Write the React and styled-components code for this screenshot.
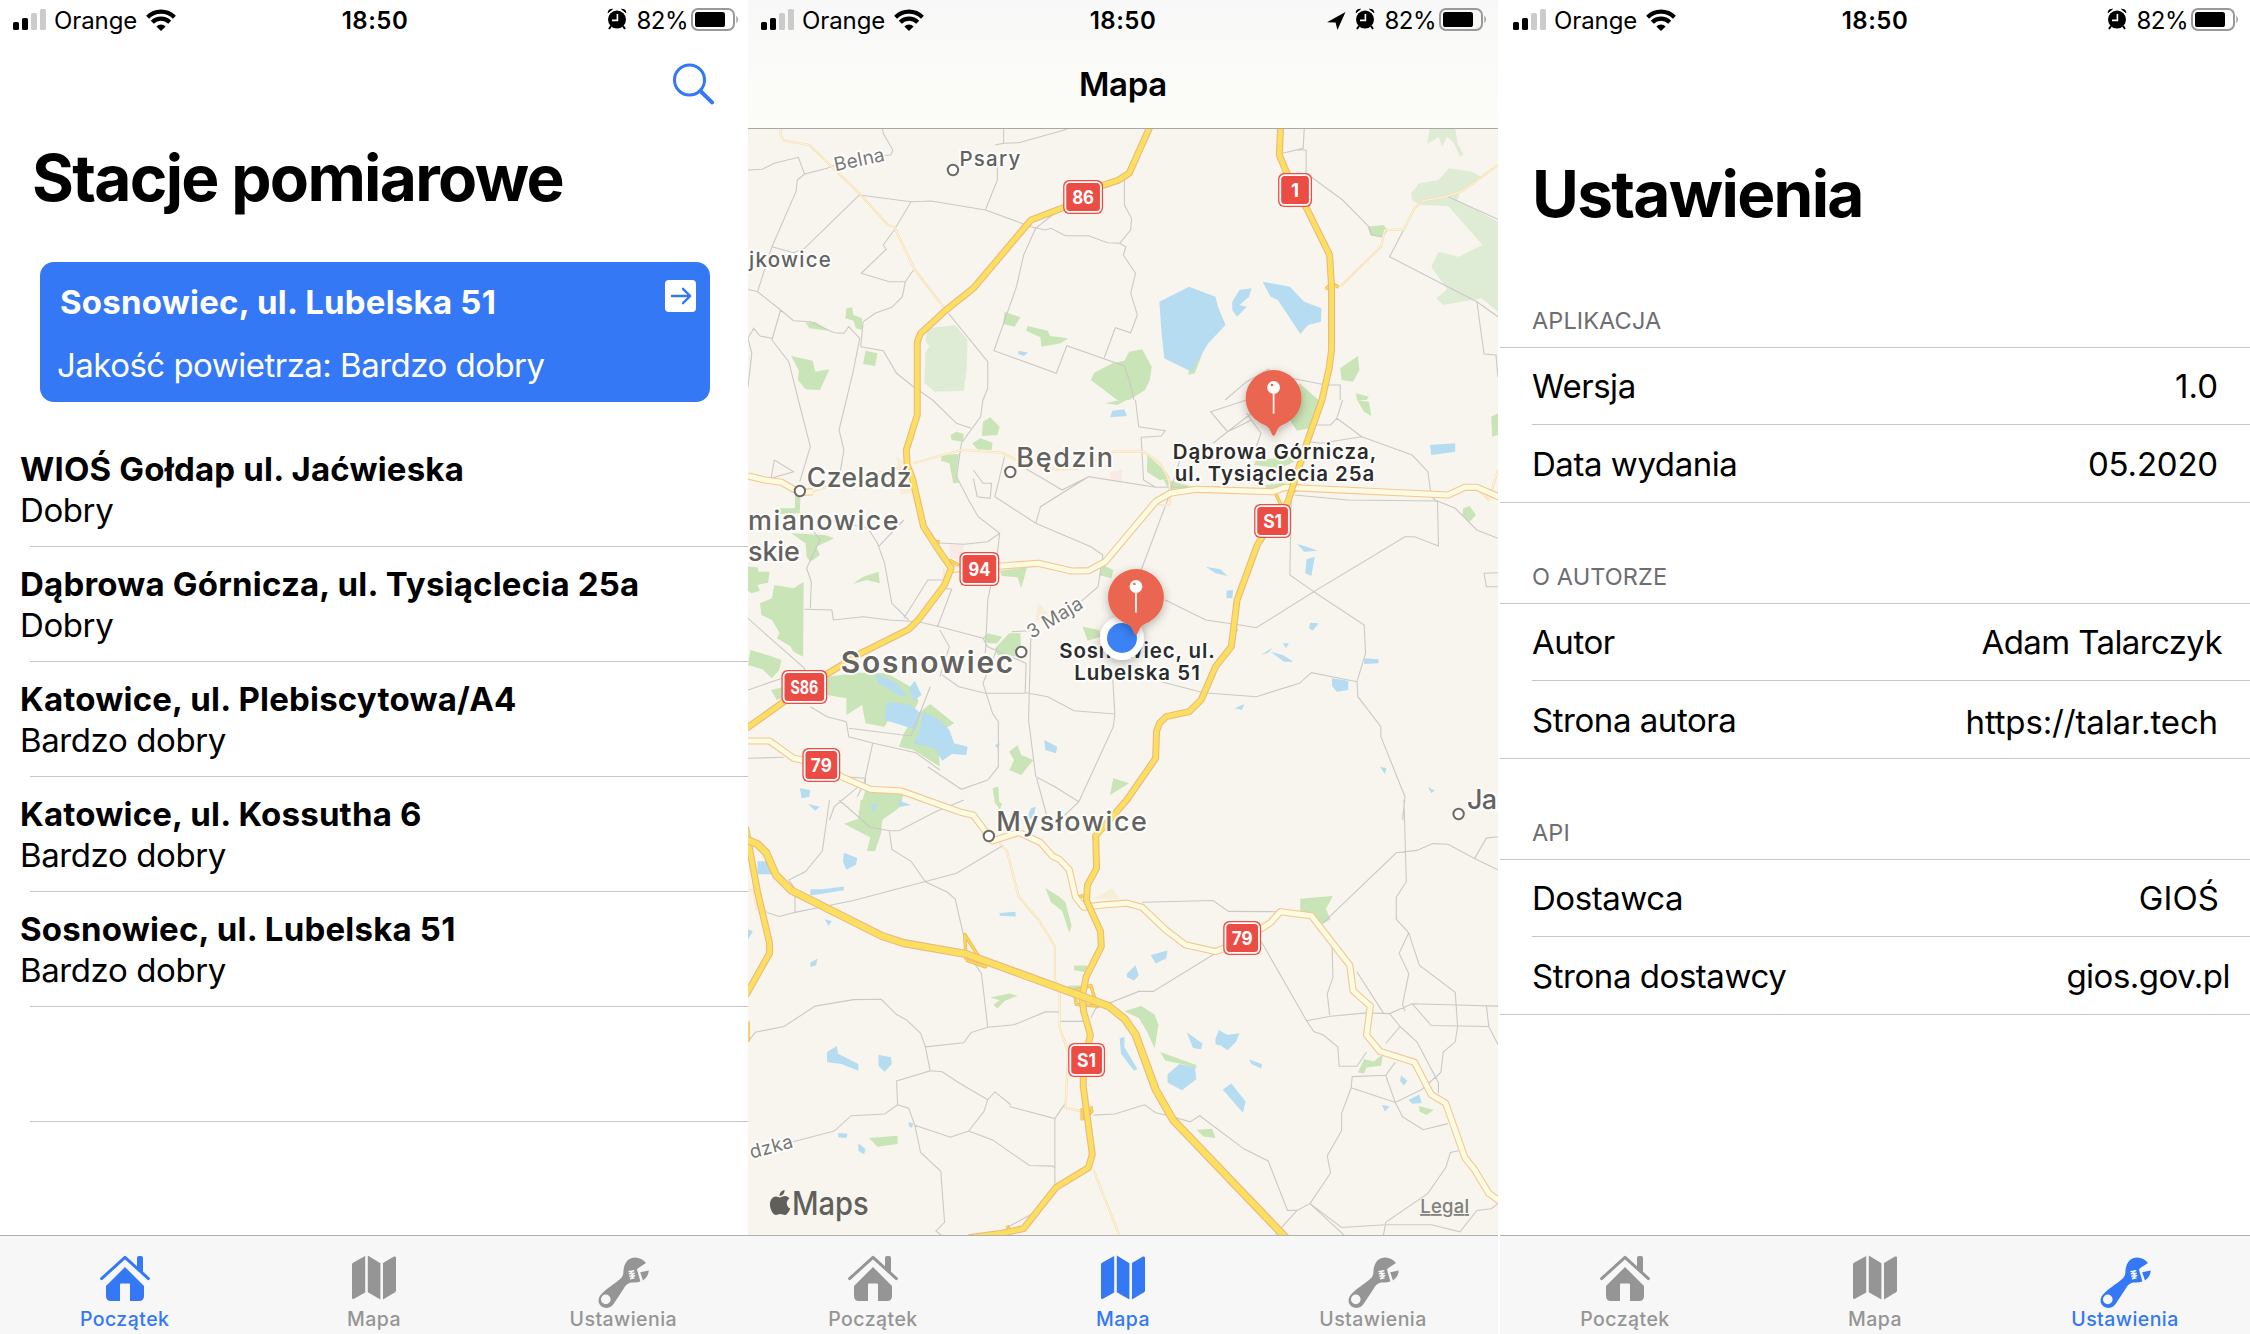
import React from "react";
import styled, { createGlobalStyle } from "styled-components";

const GlobalStyle = createGlobalStyle`
  * { box-sizing: border-box; }
  body {
    margin: 0;
    background: #fff;
    color: #000;
    font-family: Inter, "Liberation Sans", sans-serif;
  }
  svg { display: block; flex: none; }
`;

const BLUE = "#3478f6";
const GREY = "#959595";
const LINE = "#c6c6c8";

/* ---------- shell ---------- */

const Board = styled.div`
  display: flex;
  width: 2250px;
  height: 1334px;
  overflow: hidden;
  background: #fff;
`;

const Phone = styled.section`
  display: flex;
  flex-direction: column;
  width: ${(p) => p.$width}px;
  margin-left: ${(p) => p.$gap || 0}px;
  height: 1334px;
  overflow: hidden;
  background: #fff;
`;

const Body = styled.main`
  flex: 1;
  min-height: 0;
  display: flex;
  flex-direction: column;
`;

/* ---------- status bar ---------- */

const StatusRow = styled.header`
  flex: none;
  display: grid;
  grid-template-columns: 1fr auto 1fr;
  align-items: center;
  height: 40px;
  padding: 0 ${(p) => p.$inset}px 0 13px;
  font-size: 24px;
  line-height: 38px;
`;

const StatusSide = styled.div`
  display: flex;
  align-items: center;
  justify-content: ${(p) => (p.$end ? "flex-end" : "flex-start")};
`;

const Carrier = styled.span`
  margin: 0 9px 0 7px;
  padding-top: 2px;
  letter-spacing: -0.1px;
`;

const Clock = styled.time`
  margin-right: 3px;
  padding-top: 2px;
  font-weight: 600;
  letter-spacing: 0.5px;
`;

const Percent = styled.span`
  margin: 0 3px 0 9px;
  padding-top: 2px;
  letter-spacing: -0.5px;
`;

function StatusBar({ location, inset = 10 }) {
  return (
    <StatusRow $inset={inset}>
      <StatusSide>
        <svg width="34" height="40" viewBox="0 0 34 40">
          <rect x="0" y="22" width="6" height="8" rx="1.6" />
          <rect x="9" y="18" width="6" height="12" rx="1.6" />
          <rect x="18" y="13" width="6" height="17" rx="1.6" fill="#cbcbcb" />
          <rect x="27" y="9" width="6" height="21" rx="1.6" fill="#cbcbcb" />
        </svg>
        <Carrier>Orange</Carrier>
        <svg width="30" height="40" viewBox="0 0 30 40" fill="none" stroke="#000" strokeWidth="4.2">
          <path d="M1.6 17.2A19 19 0 0 1 28.4 17.2" />
          <path d="M6.3 22.2A12.4 12.4 0 0 1 23.7 22.2" />
          <path d="M10.4 26.4A6.6 6.6 0 0 1 19.6 26.4L15 31Z" fill="#000" stroke="none" />
        </svg>
      </StatusSide>
      <Clock>18:50</Clock>
      <StatusSide $end>
        {location && (
          <svg width="29" height="40" viewBox="0 0 29 40">
            <path d="M19.5 12L1 22.2L9.6 22.6L11.4 30Z" />
          </svg>
        )}
        <svg width="20" height="40" viewBox="0 0 20 40">
          <circle cx="10" cy="19.6" r="9" />
          <path d="M1 12.6Q1.4 9 5.4 9.2Z M19 12.6Q18.6 9 14.6 9.2Z" stroke="#000" strokeWidth="1" />
          <path d="M4 26L2 29M16 26L18 29" stroke="#000" strokeWidth="2" />
          <path d="M10.4 14V20.4H5" fill="none" stroke="#fff" strokeWidth="1.6" />
        </svg>
        <Percent>82%</Percent>
        <svg width="49" height="40" viewBox="0 0 49 40">
          <rect x="1" y="9" width="42" height="21" rx="6" fill="none" stroke="#999" strokeWidth="2" />
          <rect x="4" y="12" width="30" height="15" rx="2.6" />
          <path d="M45.4 15.6Q48.6 19.5 45.4 23.4Z" fill="#999" />
        </svg>
      </StatusSide>
    </StatusRow>
  );
}

/* ---------- tab bar ---------- */

const Tabs = styled.nav`
  flex: none;
  display: flex;
  height: 99px;
  border-top: 1px solid #b0b0b0;
  background: #f7f7f7;
`;

const Tab = styled.div`
  flex: 1;
  display: flex;
  flex-direction: column;
  align-items: center;
  padding-top: 18px;
  color: ${(p) => (p.$active ? BLUE : GREY)};
`;

const TabLabel = styled.span`
  margin-top: -2px;
  font-size: 19.5px;
  font-weight: 500;
  line-height: 24px;
  letter-spacing: 0.45px;
`;

const HomeIcon = () => (
  <svg width="52" height="55" viewBox="0 0 52 55" fill="currentColor">
    <path d="M26 13L45 32V42Q45 47 40 47H31V30.5Q31 29.5 30 29.5H22Q21 29.5 21 30.5V47H12Q7 47 7 42V32Z" />
    <path d="M2.6 24.6L26 3.4L49.4 24.6" fill="none" stroke="currentColor" strokeWidth="3" strokeLinecap="round" strokeLinejoin="round" />
    <path d="M38 4Q38 2 40 2H42Q44 2 44 4V19L38 13.6Z" />
  </svg>
);

const MapIcon = () => (
  <svg width="46" height="55" viewBox="0 0 46 55" fill="currentColor">
    <path d="M14.2 2V38.4L3 44.8Q1 45.6 1 43.4V10.6Q1 9.4 2 8.8Z" />
    <path d="M16.8 1.4L29.4 9.2V45.6L16.8 38.2Z" />
    <path d="M32 9L43 2.6Q45 1.8 45 4V36.4Q45 37.4 44 38.2L32 45.4Z" />
  </svg>
);

const WrenchIcon = () => (
  <svg width="54" height="55" viewBox="0 0 54 55">
    <path
      fill="currentColor"
      fillRule="evenodd"
      d="M50 9C44.6 1.6 31.6 .6 28.2 12.4C26.8 17.2 28.2 20.6 25.6 23.4C19 30 9.4 34.6 4.4 41.2C.6 46.6 3 52.6 8.6 53.8C13.4 54.6 16.2 52.4 18.6 48.6L27.8 34.4C30.8 29.4 33.6 28.4 37.6 28.6Q41.6 28.4 44.4 27.4L41.4 17Q40.4 15.6 42 14.2L50 9ZM9.8 40.6A4.8 4.8 0 1 1 9.8 50.2A4.8 4.8 0 1 1 9.8 40.6Z"
    />
    <path fill="currentColor" d="M44.2 18.2L52.8 16.6Q52.6 22.4 47 26.6Z" />
    <path d="M32.4 17.6L38.2 16.6L32.8 20L38.6 19.2L33.4 22.4L39.2 21.6L34 24.8L38.6 24" fill="none" stroke="#f7f7f7" strokeWidth="1.2" />
  </svg>
);

const TABS = [
  { name: "Początek", Icon: HomeIcon },
  { name: "Mapa", Icon: MapIcon },
  { name: "Ustawienia", Icon: WrenchIcon },
];

function TabBar({ active }) {
  return (
    <Tabs>
      {TABS.map(({ name, Icon }) => (
        <Tab key={name} $active={name === active}>
          <Icon />
          <TabLabel>{name}</TabLabel>
        </Tab>
      ))}
    </Tabs>
  );
}

/* ---------- stations ---------- */

const Toolbar = styled.div`
  flex: none;
  display: flex;
  justify-content: flex-end;
  align-items: center;
  height: 87px;
  margin-bottom: 11px;
  padding-right: 33px;
`;

const LargeTitle = styled.h1`
  margin: 0;
  padding-left: 32px;
  font-size: 64px;
  font-weight: 700;
  line-height: 80px;
  letter-spacing: -1.7px;
  white-space: nowrap;
`;

const NearestCard = styled.article`
  flex: none;
  display: flex;
  justify-content: space-between;
  width: 670px;
  height: 140px;
  margin: 44px 0 0 40px;
  padding: 18px 14px 0 17px;
  border-radius: 14px;
  background: ${BLUE};
  color: #fff;
`;

const CardTitle = styled.h2`
  margin: 0 0 0 3px;
  font-size: 33px;
  font-weight: 700;
  line-height: 44px;
  letter-spacing: 0.22px;
`;

const CardText = styled.p`
  margin: 19px 0 0;
  font-size: 33px;
  line-height: 44px;
  letter-spacing: -0.52px;
`;

const Stations = styled.ul`
  list-style: none;
  margin: 30px 0 0;
  padding: 0;
`;

const Station = styled.li`
  display: flex;
  flex-direction: column;
  height: 115px;
  padding: 17px 0 0 20px;
  background: linear-gradient(${LINE}, ${LINE}) 30px 100% / 100% 1px no-repeat;
`;

const StationName = styled.strong`
  font-size: 33px;
  font-weight: 700;
  line-height: 41px;
  letter-spacing: 0.2px;
  white-space: nowrap;
`;

const StationState = styled.span`
  font-size: 33px;
  line-height: 41px;
  letter-spacing: -0.4px;
`;

const STATIONS = [
  ["WIOŚ Gołdap ul. Jaćwieska", "Dobry"],
  ["Dąbrowa Górnicza, ul. Tysiąclecia 25a", "Dobry"],
  ["Katowice, ul. Plebiscytowa/A4", "Bardzo dobry"],
  ["Katowice, ul. Kossutha 6", "Bardzo dobry"],
  ["Sosnowiec, ul. Lubelska 51", "Bardzo dobry"],
  ["", ""],
];

function StationsScreen() {
  return (
    <Phone $width={748}>
      <StatusBar inset={8} />
      <Body>
        <Toolbar>
          <svg width="42" height="42" viewBox="0 0 42 42" fill="none" stroke={BLUE}>
            <circle cx="16.5" cy="17" r="15" strokeWidth="3" />
            <path d="M27.4 28L39 39.4" strokeWidth="4" strokeLinecap="round" />
          </svg>
        </Toolbar>
        <LargeTitle>Stacje pomiarowe</LargeTitle>
        <NearestCard>
          <div>
            <CardTitle>Sosnowiec, ul. Lubelska 51</CardTitle>
            <CardText>Jakość powietrza: Bardzo dobry</CardText>
          </div>
          <svg width="31" height="32" viewBox="0 0 31 32">
            <rect width="31" height="32" rx="4" fill="#fff" />
            <path d="M7 16H25M18 8.8L25.2 16L18 23.2" fill="none" stroke={BLUE} strokeWidth="2.4" strokeLinecap="round" strokeLinejoin="round" />
          </svg>
        </NearestCard>
        <Stations>
          {STATIONS.map(([name, state], i) => (
            <Station key={i}>
              <StationName>{name}</StationName>
              <StationState>{state}</StationState>
            </Station>
          ))}
        </Stations>
      </Body>
      <TabBar active="Początek" />
    </Phone>
  );
}

/* ---------- map ---------- */

/* Geometry is stored per tile (n, m, s); each tile has its own grid. */
const TILES = { n: [0, 3], m: [400, 3], s: [800, 2.936] };
const GRID_X = 2.08;

function toPoint(tile, x, y) {
  const [top, scale] = TILES[tile];
  return [+(x / GRID_X).toFixed(1), +(top + y / scale).toFixed(1)];
}

function trace(source, close) {
  let tile = "n";
  const out = [];
  const tokens = source.trim().split(/\s+/);
  for (let i = 0; i < tokens.length; ) {
    if (TILES[tokens[i]]) {
      tile = tokens[i];
      i += 1;
    } else {
      out.push(toPoint(tile, +tokens[i], +tokens[i + 1]).join(" "));
      i += 2;
    }
  }
  return "M" + out.join("L") + (close ? "Z" : "");
}

const join = (list, close) => list.map((s) => trace(s, close)).join("");

const FOREST = [
  "n 1422 385 1475 385 1480 430 1492 462 1485 470 1472 428 1458 410 1448 438 1440 412 1416 432",
  "n 1383 580 1400 550 1440 540 1462 505 1510 515 1528 530 1500 560 1485 575 1480 600 1564 665 1564 935 1530 895 1450 915 1435 895 1458 868 1425 800 1440 755 1482 770 1532 735 1460 618 1400 615 1385 600",
  "n 375 985 432 975 458 1020 456 1110 450 1172 390 1175 368 1150 370 1055 378 1040 370 1020",
];

const PARK = [
  "n 120 968 140 965 168 992 128 985",
  "n 205 925 217 922 220 945 238 955 238 990 225 985 220 962 203 955",
  "n 245 1052 270 1060 265 1098 240 1092",
  "n 90 1068 135 1082 140 1115 170 1108 150 1170 120 1168 104 1140 106 1112",
  "n 535 935 568 952 556 980 532 972",
  "n 583 978 625 992 630 1008 668 1015 652 1030 612 1040 610 1012 580 992",
  "n 795 1055 822 1048 842 1100 838 1140 828 1170 795 1200 770 1200 715 1140 722 1118 760 1090 785 1082",
  "n 955 1015 958 1020 932 1120 918 1125 925 1080",
  "n 1292 680 1325 675 1335 690 1325 710 1298 705",
  "n 1235 1105 1272 1068 1275 1110 1262 1145 1238 1140",
  "n 1268 1180 1295 1190 1290 1200 1270 1200",
  "n 1150 1150 1190 1200 1120 1200",
  "m 1120 40 1150 0 1192 0 1172 85 1145 92",
  "m 1270 0 1295 5 1300 48 1285 35",
  "m 1550 50 1564 40 1564 105 1552 110",
  "m 745 10 775 0 790 0 770 15",
  "m 490 65 505 52 525 80 520 105 488 108",
  "m 422 105 435 95 450 102 448 125 425 120",
  "m 468 130 485 115 510 128 508 150 478 148",
  "m 405 165 440 162 435 215 440 248 428 250 420 190 402 182",
  "m 833 165 872 215 880 235 858 240 832 215",
  "m 1060 180 1130 170 1140 185 1110 205 1055 195",
  "m 865 235 920 258 905 275 880 275",
  "m 1080 255 1120 248 1125 265 1080 270",
  "m 62 325 98 325 98 270 110 270 108 340 65 342",
  "m 90 400 160 405 180 415 142 440 150 465 130 485 122 470 120 430",
  "m 0 500 20 502 22 515 45 515 42 548 20 555 25 572 8 580 0 572",
  "m 25 610 50 595 55 555 95 565 116 545 115 770 95 755 88 738 60 715 66 700 50 660 28 645",
  "m 218 552 240 530 272 515 275 550 248 540",
  "m 525 512 582 502 570 565 562 532 530 528",
  "m 740 495 762 510 758 535 732 525",
  "m 1492 325 1505 318 1518 345 1505 365 1490 345",
  "m 500 700 530 710 520 730 500 730 490 712",
  "m 545 700 568 700 570 770 520 765 515 745",
  "m 698 680 732 690 735 710 708 722",
  "m 5 750 40 765 70 780 65 810 50 835 30 808 0 795",
  "m 48 870 72 862 80 890 60 900",
  "m 165 830 230 818 290 820 350 870 355 905 340 950 300 940 285 980 245 970 238 915 205 945 205 895 165 885",
  "m 345 950 380 912 430 970 395 1000 400 1100 345 1050 315 1040 325 1000",
  "m 545 1055 562 1035 570 1065 595 1080 570 1125 545 1110 555 1080",
  "m 510 1165 522 1160 525 1225 515 1210",
  "m 762 1135 795 1150 755 1185",
  "m 245 1170 325 1178 318 1220 280 1260 230 1240",
  "s 235 0 320 0 280 60 278 95 265 150 248 150 255 110 200 70 230 55",
  "s 515 0 530 10 525 30",
  "s 620 258 650 285 662 300 675 370 670 390 655 325 632 300",
  "s 1152 290 1220 282 1205 320 1215 350 1198 365 1175 330 1152 328",
  "s 680 486 708 486 702 505 680 500",
  "s 668 545 695 545 690 560 665 552",
  "s 505 580 545 568 562 575 535 590 520 612 512 600 525 588",
  "s 785 620 820 605 848 630 856 660 848 730 832 680 815 640",
  "s 860 740 900 760 935 778 935 788 905 775 870 765",
  "s 1285 760 1305 768 1325 745 1320 780 1290 785 1285 803 1272 800",
  "s 1400 898 1430 910 1415 925 1400 915",
  "s 935 968 968 965 975 992 950 988",
  "s 252 992 312 986 312 1010 270 1018",
];

const WATER = [
  "n 858 905 920 860 975 890 980 920 996 975 960 1030 925 1115 868 1075 862 990",
  "n 1073 845 1130 860 1160 905 1196 925 1195 965 1168 975 1152 1002 1105 900 1090 890",
  "n 1010 905 1025 870 1050 865 1045 890 1025 915 1040 920 1020 950 1010 930",
  "n 565 1052 584 1058 575 1068 563 1062",
  "m 760 32 785 28 790 48 755 52",
  "m 1422 135 1475 130 1475 155 1425 165",
  "m 1145 432 1165 440 1188 452 1160 455",
  "m 1165 478 1182 470 1175 528 1162 520",
  "m 955 500 985 508 1000 528 975 520",
  "m 998 572 1012 570 1010 595 998 595",
  "m 1172 668 1190 670 1178 692 1170 685",
  "m 1070 765 1095 742 1085 758",
  "m 1090 755 1115 765 1138 785 1118 785",
  "m 1115 730 1128 730 1122 745",
  "m 1285 775 1315 778 1315 790 1285 792",
  "m 1218 835 1252 842 1252 870 1228 875 1218 858",
  "m 1015 925 1035 912 1030 930",
  "m 265 820 310 850 332 888 318 888 272 850",
  "m 335 865 348 842 362 885 345 902",
  "m 290 905 340 915 360 940 350 990 320 975 285 960",
  "m 365 935 400 960 420 990 430 1030 458 1040 455 1065 425 1062 405 1082 390 1045 345 1030 358 990",
  "m 515 1035 525 1030 522 1048",
  "m 618 1020 645 1040 642 1060 620 1050",
  "m 108 1165 130 1170 128 1190 112 1195",
  "m 125 1212 150 1220 140 1232",
  "m 1318 1100 1332 1105 1328 1122",
  "m 1418 1160 1432 1172 1425 1180",
  "m 580 1260 590 1225 600 1220 595 1255",
  "s 255 15 272 12 262 35",
  "s 312 0 340 15 318 20",
  "s 200 155 228 170 225 190 205 205 198 180",
  "s 20 180 48 180 48 218 20 218",
  "s 130 262 155 262 200 254 200 265 155 275 130 280",
  "s 525 332 558 328 558 342 525 340",
  "s 160 350 175 355 168 370",
  "s 130 478 145 465 142 485 130 490",
  "s 0 380 10 385 0 410",
  "s 840 455 875 442 872 465 850 480",
  "s 790 510 808 485 815 515 805 530 790 520",
  "s 775 700 785 695 785 725 812 790 805 795 778 745",
  "s 165 740 185 722 188 745 230 775 230 795 195 775 165 770",
  "s 272 748 298 755 300 775 285 798 272 780",
  "s 915 682 948 715 945 732 928 728",
  "s 975 700 982 675 1000 690 1025 685 1018 710 1000 735 985 720 975 718",
  "s 875 805 900 775 932 785 935 820 905 852 875 830",
  "s 990 850 1008 832 1038 885 1032 918",
  "s 1045 762 1072 775 1070 788 1050 775",
  "s 1362 808 1375 825 1368 838 1360 825",
  "s 1378 880 1400 865 1405 890 1385 892",
  "s 1322 895 1338 900 1328 915",
  "s 188 978 208 980 205 992 188 990",
  "s 230 1008 245 1025 242 1040 230 1030",
  "s 335 945 345 950 342 962 335 958",
];

const BUILT = [
  "m 420 435 450 430 450 475 422 475",
  "m 755 215 780 210 780 250 758 242",
];

const SAND = [
  "m 605 608 625 640 598 670",
  "s 720 290 760 258 775 290",
  "m 310 170 345 200 345 275 318 285",
];

const LANES = [
  "n 0 510 30 508 55 490 105 472 118 522 165 505 190 490",
  "n 280 385 282 400 302 450 298 465 270 468",
  "n 118 522 103 540 100 575 50 740 20 875 0 868",
  "n 50 740 95 758 118 745 232 585 340 605 382 603 495 630 590 680",
  "n 495 630 520 540 520 490",
  "n 533 385 533 430 515 435",
  "n 533 430 565 428 665 388",
  "n 340 605 305 690 282 735 288 748 236 820 295 845 328 845 322 890 300 922 265 940 240 965 235 1040",
  "n 345 810 328 845",
  "n 590 680 620 690 632 685 662 707 710 707 750 728 775 730 788 740 783 765 808 820 798 880 812 945 798 998 766 983 743 1073",
  "n 785 540 785 615 800 655 798 690 775 730",
  "n 655 622 600 685 575 765 560 860 513 1052 643 1120 665 1037 785 1098 795 1140 805 1200",
  "n 418 940 500 1085 500 1165 490 1200",
  "n 20 875 68 930 95 962 130 965 180 998 200 1000 210 980 233 1015 220 1110 205 1200",
  "n 68 930 50 1020 85 1085 105 1200",
  "n 50 1015 25 1008 12 985 0 1015 8 1060 0 1160",
  "n 235 1040 282 1052 310 1120 345 1160 385 1200",
  "n 1160 385 1158 445 1115 460",
  "n 1140 450 1164 450 1164 520 1240 600 1295 680 1300 705 1325 712",
  "n 1460 590 1564 658",
  "n 1368 688 1338 770 1520 905 1564 950",
  "n 1520 905 1535 1062 1560 1065 1564 1130",
  "n 995 1200 1040 1145 1085 1108 1100 1125 1205 1155",
  "n 1205 1155 1235 1155 1235 1200",
  "m 105 0 130 140 108 245",
  "m 205 0 190 90 200 150 190 235",
  "m 55 180 95 215 48 235 55 180",
  "m 490 0 485 50 445 130 435 230 460 300 480 350 525 400 520 460 500 600 495 760",
  "m 525 400 500 425 450 433 390 428",
  "m 385 0 435 70 465 85",
  "m 808 0 815 80 870 92 862 108 822 112",
  "m 820 110 825 240 850 262 1000 260",
  "m 1040 0 965 35 1000 95 1050 60",
  "m 1050 40 1000 95 970 130",
  "m 1040 40 1070 100 1060 140",
  "m 1240 0 1228 55 1215 75 1170 75",
  "m 1228 55 1280 110 1195 130 1170 125",
  "m 1280 110 1385 165 1418 215 1425 290 1438 305",
  "m 1140 285 1250 300 1438 303 1440 438 1390 410 1370 410 1180 575 1130 525 1133 290",
  "m 1438 303 1475 325 1520 390 1564 415",
  "m 1180 575 1060 683 1015 672",
  "m 1180 575 1285 675 1288 760 1270 845 1175 818 1150 850 1060 890 950 878 862 845",
  "m 1270 845 1272 890 1320 980 1320 1010 1370 1190 1365 1260",
  "m 1564 518 1535 520 1540 560 1564 560",
  "m 870 600 955 660 1012 672",
  "m 905 160 875 300 820 510",
  "m 470 210 490 250 508 250 505 295 478 290 470 235",
  "m 535 170 515 290 600 370 715 440 740 465 730 560 690 610",
  "m 600 370 610 320 710 230 850 262",
  "m 560 190 620 240 655 270 710 230",
  "m 150 355 250 385 270 430 285 490 300 610 335 660",
  "m 325 360 272 440",
  "m 130 380 150 420 122 505 132 545 130 625",
  "m 118 628 175 630 178 660 240 650 295 660 355 665 400 680 490 715 500 740 580 790 578 880 495 880 440 860 405 825",
  "m 405 540 375 540 325 655",
  "m 405 565 425 568 395 680",
  "m 400 690 420 740 400 830",
  "m 0 655 35 700 118 805 118 820",
  "m 520 745 490 850 510 940 522 965 522 1100 500 1140 445 1168 375 1100",
  "m 590 700 585 960 600 1130 640 1160 690 1205",
  "m 580 878 625 890 680 932 765 942 760 820",
  "m 765 942 762 980 690 1205 650 1260",
  "m 550 695 590 692",
  "m 0 870 80 830",
  "m 130 920 165 950 205 965 210 1010 262 1030 350 1058 400 1110",
  "m 210 985 340 1008 380 860",
  "m 260 1030 242 1150 228 1190",
  "m 0 1075 75 1072",
  "m 200 1130 245 1135 245 1160",
  "m 602 1135 620 1230 625 1260",
  "m 230 1160 180 1220 170 1260",
  "s 170 0 155 150 120 210 85 235 98 260 98 330 65 342 40 330",
  "s 98 330 220 295 368 240 435 215 530 135",
  "s 190 0 255 80 295 90 300 145 340 180 370 240 415 270 432 290 450 400",
  "s 295 90 315 90 390 35 450 0",
  "s 0 710 15 682 75 665 140 605 220 586 278 585 310 630 330 645 360 685 370 725 380 795 310 825 312 895 285 922 215 927 180 972 90 1005",
  "s 370 725 450 713 465 683 500 667 555 660 620 622 650 622",
  "s 470 475 487 510 500 667",
  "s 380 795 405 798 440 830 500 880",
  "s 545 900 640 935 662 890",
  "s 312 895 335 905 348 955 360 1035 402 1090 410 1240 392 1265 405 1280",
  "s 348 955 422 990 460 972 492 915 500 880 515 857 548 895",
  "s 460 972 510 998 587 1073 635 1075 640 1080",
  "s 640 935 640 1130",
  "s 540 1255 600 1210",
  "s 650 650 700 650",
  "s 715 640 725 612 815 562 845 562 975 450",
  "s 720 925 765 922 827 895 850 918 885 930 922 945 942 927 1035 1025 1085 1060 1125 1205 1145 1205 1172 1185 1238 1255 1330 1247 1425 1247 1485 1268 1520 1205 1550 1200 1564 1185",
  "s 1145 1205 1100 1275",
  "s 1172 1185 1215 1095 1208 1045 1238 970 1238 920 1258 845 1260 812 1330 808 1350 770",
  "s 1172 1185 1245 1280",
  "s 1325 1280 1330 1240 1418 1155 1455 1080 1465 1035 1482 1030",
  "s 822 300 970 295 1002 327 1105 328",
  "s 1070 415 1165 648 1180 680 1200 690 1230 725 1233 782 1270 782 1290 740",
  "s 1165 648 1215 635 1290 625 1338 627 1385 598 1480 602 1564 605",
  "s 1218 415 1220 520 1208 570 1213 632",
  "s 1200 360 1352 155 1395 148 1428 128 1460 130 1515 172 1564 205",
  "s 1515 172 1540 112 1564 108",
  "s 1368 0 1373 240 1352 285 1352 350 1378 390 1358 450 1378 510 1365 600 1370 620",
  "s 1378 390 1400 485 1475 565 1480 665",
  "s 1338 627 1360 665 1330 715",
  "s 1385 598 1425 662 1545 665 1564 718",
  "s 1540 605 1545 665",
  "s 1480 665 1475 710 1450 740 1445 800 1405 850 1350 888 1258 845",
  "s 1270 505 1325 625",
  "s 1330 808 1350 888 1365 930 1408 968 1460 950",
  "s 1360 665 1395 710 1440 830 1440 860",
];

const BYWAYS = [
  "n 68 385 68 405 75 422 128 435 232 580 292 675 305 680 348 810 410 925",
  "m 345 190 445 150 530 158 560 180 640 208 690 205 760 155 825 155 860 190 878 240 880 290",
  "n 1564 495 1490 573 1450 592 1408 602 1390 625 1368 688 1328 690 1320 740 1235 860",
  "s 525 125 540 150 565 285 605 350 640 430 640 525 650 560 650 670 668 740 662 905 700 915",
  "s 720 1085 775 1280",
  "m 1564 210 1545 300 1520 265",
  "m 880 280 880 315 855 315",
  "m 135 275 215 235 335 200",
  "m 410 505 405 560 410 545",
  "s 0 265 12 265 18 320 40 330",
];

const LINKS = [
  "s 455 470 452 395 495 490 455 470",
  "s 680 560 715 545 728 605 685 600 680 560",
  "m 1100 280 1112 315",
  "m 420 480 445 500 420 520",
  "s 700 280 690 285",
  "s 697 905 697 940",
  "s 715 900 717 915 710 925",
  "n 1205 868 1217 850 1232 862",
  "m 1128 282 1155 260 1130 250",
  "s 540 1250 545 1260",
  "s 0 650 0 710",
  "m 400 425 385 425",
  "m 1010 670 1018 690 1010 710",
];

const MAIN_ROADS = [
  "m 0 228 35 240 70 247 108 278 135 275",
  "m 424 508 530 498 605 490 675 513 710 512 745 485 850 305 880 280 935 268 1095 275 1120 262 1460 285 1495 262 1520 262 1568 292",
  "m 0 1023 45 1023 95 1075 150 1090 195 1130 255 1168 320 1173 440 1235 s 470 45 510 120 565 95 610 125 635 165 650 175 670 205 683 285 700 315 740 308 790 303 822 315 870 380 912 425 975 445 1030 415 1090 360 1110 328 1175 340 1255 485 1262 560 1298 605 1290 690 1318 738 1390 770 1425 865 1455 890 1495 1050 1515 1085 1545 1155 1568 1178",
];

const HIGHWAYS = [
  "n 840 375 795 520 772 541 740 556 660 622 590 660 470 865 413 930 360 1000 353 1025 353 1200 m 353 45 330 150 332 195 343 235 366 380 400 455 424 505 410 555 355 660 335 688 235 760 165 822 75 905 -5 987",
  "n 1111 375 1108 465 1118 500 1140 570 1165 625 1213 765 1217 860 1217 1050 1212 1105 1197 1200 m 1165 130 1125 310 1095 360 1062 435 1020 600 1008 740 975 800 945 900 920 935 872 950 858 970 852 995 850 1075 790 1200 s 725 105 727 200 708 250 706 295 735 385 737 430 705 520 697 580 700 620 714 690 700 780 699 840 708 935 718 1040 710 1080 642 1138 575 1258 530 1272 460 1285",
  "s -5 80 20 270 45 420 45 450 -5 575",
];

const MOTORWAYS = [
  "s -5 115 20 130 38 155 58 220 90 265 280 400 325 420 455 452 700 578 752 605 785 642 808 688 850 850 887 940 1125 1290",
];

const PLACES = [
  { text: "Psary", x: 212, y: 166, size: 20.5, width: 61 },
  { text: "jkowice", x: 1, y: 267, size: 20.5, width: 82 },
  { text: "Będzin", x: 269, y: 467, size: 27, width: 97 },
  { text: "Czeladź", x: 59, y: 487, size: 26.5, width: 105 },
  { text: "mianowice", x: 0, y: 530, size: 27, width: 151 },
  { text: "skie", x: 0, y: 561, size: 27, width: 52 },
  { text: "Sosnowiec", x: 93, y: 673, size: 30, width: 173, weight: 600 },
  { text: "Mysłowice", x: 249, y: 831, size: 27, width: 151 },
  { text: "Ja", x: 721, y: 809, size: 27, width: 30 },
];

const STREETS = [
  { text: "Belna", x: 113, y: 166, angle: -12, size: 19 },
  { text: "3 Maja", x: 311, y: 623, angle: -31, size: 19 },
  { text: "dzka", x: 25, y: 1153, angle: -15, size: 19 },
];

const STATION_LABELS = [
  { text: "Dąbrowa Górnicza,", x: 426, y: 459, width: 204 },
  { text: "ul. Tysiąclecia 25a", x: 428, y: 481, width: 200 },
  { text: "Sosnowiec, ul.", x: 312, y: 658, width: 156 },
  { text: "Lubelska 51", x: 327, y: 680, width: 126 },
];

const TOWN_DOTS = [
  [205.5, 170], [263, 472], [52, 491], [274, 652], [241.5, 836], [712.5, 814],
];

const SHIELDS = [
  ["86", 336, 197, 40, 22], ["1", 548.5, 190, 34], ["S1", 526, 521, 37, 19], ["94", 232, 569, 40, 22],
  ["S86", 56.5, 687, 46, 28], ["79", 73.5, 765, 38, 21], ["79", 495.5, 938, 38, 21], ["S1", 339.5, 1060, 37, 19],
];

const PINS = [[527, 398], [389, 597]];

const NavBar = styled.div`
  flex: none;
  height: 129px;
  border-bottom: 1px solid #a9a8a5;
  background: linear-gradient(#f8f8f8, #fcfcf8);
`;

const NavTitle = styled.h2`
  margin: 0;
  padding-top: 22px;
  font-size: 33px;
  font-weight: 600;
  line-height: 44px;
  letter-spacing: -0.3px;
  text-align: center;
`;

const MapCanvas = styled.svg`
  width: 750px;
  height: 1106px;
  background: #f8f5ee;
`;

const PlaceText = styled.text`
  fill: #63625f;
  stroke: rgba(255, 255, 255, 0.85);
  stroke-width: 4px;
  stroke-linejoin: round;
  paint-order: stroke;
`;

const StationText = styled(PlaceText)`
  fill: #2c2c2c;
  font-size: 20.5px;
  font-weight: 600;
`;

const StreetText = styled(PlaceText)`
  fill: #7a7976;
  letter-spacing: 0.3px;
`;

const ShieldText = styled.text`
  fill: #fff;
  font-size: 18.8px;
  font-weight: 700;
  text-anchor: middle;
`;

function Road({ lines, casing, fill, width, edge }) {
  const d = join(lines);
  return (
    <g fill="none" strokeLinejoin="round">
      <path d={d} stroke={casing} strokeWidth={width + edge} />
      <path d={d} stroke={fill} strokeWidth={width} />
    </g>
  );
}

function MapView() {
  return (
    <MapCanvas viewBox="0 129 752 1106" preserveAspectRatio="none">
      <defs>
        <filter id="soft" x="-50%" y="-50%" width="200%" height="200%">
          <feDropShadow dx="0" dy="3" stdDeviation="5" floodOpacity="0.28" />
        </filter>
      </defs>
      <path d={join(FOREST, true)} fill="#dfecd5" />
      <path d={join(PARK, true)} fill="#c9e4b6" />
      <path d={join(BUILT, true)} fill="#faeae6" />
      <path d={join(SAND, true)} fill="#f8eed8" />
      <path d={join(WATER, true)} fill="#b5dcf1" />
      <path d={join(LANES)} fill="none" stroke="#cbc9c5" strokeWidth="1.1" />
      <Road lines={BYWAYS} casing="#f7dcae" fill="#fdf6df" width={1} edge={1.2} />
      <Road lines={LINKS} casing="#efb163" fill="#f9d94f" width={2} edge={1.4} />
      <Road lines={MAIN_ROADS} casing="#f2c794" fill="#fefbe0" width={5} edge={2.2} />
      <Road lines={HIGHWAYS} casing="#ecb880" fill="#fbe05f" width={4.8} edge={2.2} />
      <Road lines={MOTORWAYS} casing="#ecb880" fill="#fbe05f" width={6} edge={2.2} />
      {STREETS.map((s) => (
        <StreetText key={s.text} transform={`translate(${s.x} ${s.y}) rotate(${s.angle})`} fontSize={s.size} textAnchor="middle">
          {s.text}
        </StreetText>
      ))}
      {TOWN_DOTS.map(([x, y]) => (
        <circle key={x} cx={x} cy={y} r="5.2" fill="#fff" stroke="#6b6a67" strokeWidth="2" />
      ))}
      {PLACES.map((p) => (
        <PlaceText key={p.text} x={p.x} y={p.y} fontSize={p.size} fontWeight={p.weight || 500} textLength={p.width}>
          {p.text}
        </PlaceText>
      ))}
      {SHIELDS.map(([text, x, y, w, len]) => (
        <g key={x}>
          <rect x={x - w / 2} y={y - 17} width={w} height="34" rx="6" fill="#eb4d45" />
          <rect x={x - w / 2 + 2.2} y={y - 14.8} width={w - 4.4} height="29.6" rx="4.4" fill="none" stroke="#fff" strokeWidth="1.8" />
          <ShieldText x={x} y={y + 6.8} textLength={len} lengthAdjust="spacingAndGlyphs">{text}</ShieldText>
        </g>
      ))}
      {STATION_LABELS.map((l) => (
        <StationText key={l.text} x={l.x} y={l.y} textLength={l.width}>
          {l.text}
        </StationText>
      ))}
      <circle cx="375" cy="638" r="22" fill="#fff" filter="url(#soft)" />
      <circle cx="375" cy="638" r="15" fill="#3b82f7" />
      {PINS.map(([x, y]) => (
        <g key={x} transform={`translate(${x} ${y})`}>
          <path d="M-28 0A28 28 0 1 1 28 0C28 15 18 23.5 8 27.4C5 28.6 3.4 32 1.6 36.4Q0 39 -1.6 36.4C-3.4 32 -5 28.6 -8 27.4C-18 23.5 -28 15 -28 0Z" fill="#eb6651" filter="url(#soft)" />
          <circle cy="-10.5" r="6.4" fill="#fff" />
          <circle cx="-1.6" cy="-13" r="1.3" fill="#eb6651" />
          <path d="M0 -4V15.6" stroke="#fff" strokeWidth="1.7" />
        </g>
      ))}
      <g fill="#5f5f5b" transform="translate(22 1190)">
        <path d="M14.6 0C15 3 12.4 6 9.6 6C9.2 3.2 12 .4 14.6 0Z" />
        <path d="M10 7.4C11.2 7.4 12.6 6 15 6C17 6 18.6 7 19.6 8.4C15.6 11 16.2 16.6 20.4 18.4C19.4 21.2 17 25 14.8 25C13 25 12.4 24 10.4 24C8.4 24 7.6 25 6 25C3.4 25 0 19.4 0 14.4C0 9.4 3 6.4 6 6.4C7.8 6.4 9 7.4 10 7.4Z" />
      </g>
      <text x="44" y="1215" fontSize="32" fontWeight="500" fill="#5f5f5b" textLength="77" lengthAdjust="spacingAndGlyphs">Maps</text>
      <text x="674" y="1213" fontSize="18.5" fontWeight="500" fill="#80807c" textDecoration="underline" textLength="49">Legal</text>
    </MapCanvas>
  );
}

function MapScreen() {
  return (
    <Phone $width={750}>
      <NavBar>
        <StatusBar location />
        <NavTitle>Mapa</NavTitle>
      </NavBar>
      <Body>
        <MapView />
      </Body>
      <TabBar active="Mapa" />
    </Phone>
  );
}

/* ---------- settings ---------- */

const SettingsHead = styled.div`
  flex: none;
  height: 261px;
  padding-top: 114px;
`;

const Group = styled.section`
  flex: none;
  height: 256px;
`;

const GroupTitle = styled.h3`
  margin: 0;
  padding: 4px 0 0 32px;
  height: 47px;
  border-bottom: 1px solid ${LINE};
  color: #6d6d72;
  font-size: 23.5px;
  font-weight: 400;
  line-height: 32px;
  letter-spacing: 0.1px;
`;

const Setting = styled.div`
  display: flex;
  justify-content: space-between;
  height: ${(p) => (p.$last ? 78 : 77)}px;
  padding: ${(p) => (p.$last ? 17 : 16)}px 0 0 32px;
  background: linear-gradient(${LINE}, ${LINE}) ${(p) => (p.$last ? 0 : 32)}px 100% / 100% 1px no-repeat;
  font-size: 33px;
  line-height: 44px;
  letter-spacing: -0.45px;
`;

const Value = styled.span`
  padding-top: ${(p) => p.$drop || 0}px;
  margin-right: ${(p) => p.$right}px;
  letter-spacing: ${(p) => p.$track}px;
`;

const GROUPS = [
  {
    title: "APLIKACJA",
    rows: [
      { label: "Wersja", value: "1.0", right: 32, track: 0 },
      { label: "Data wydania", value: "05.2020", right: 32, track: -0.2 },
    ],
  },
  {
    title: "O AUTORZE",
    rows: [
      { label: "Autor", value: "Adam Talarczyk", right: 28, track: -0.6 },
      { label: "Strona autora", value: "https://talar.tech", right: 32, track: -0.15, drop: 2 },
    ],
  },
  {
    title: "API",
    rows: [
      { label: "Dostawca", value: "GIOŚ", right: 31, track: 0.1 },
      { label: "Strona dostawcy", value: "gios.gov.pl", right: 20, track: -0.5 },
    ],
  },
];

function SettingsScreen() {
  return (
    <Phone $width={750} $gap={2}>
      <StatusBar />
      <Body>
        <SettingsHead>
          <LargeTitle>Ustawienia</LargeTitle>
        </SettingsHead>
        {GROUPS.map(({ title, rows }) => (
          <Group key={title}>
            <GroupTitle>{title}</GroupTitle>
            {rows.map(({ label, value, right, track, drop }, i) => (
              <Setting key={label} $last={i === rows.length - 1}>
                <span>{label}</span>
                <Value $right={right} $track={track} $drop={drop}>{value}</Value>
              </Setting>
            ))}
          </Group>
        ))}
      </Body>
      <TabBar active="Ustawienia" />
    </Phone>
  );
}

export default function App() {
  return (
    <>
      <GlobalStyle />
      <Board>
        <StationsScreen />
        <MapScreen />
        <SettingsScreen />
      </Board>
    </>
  );
}
